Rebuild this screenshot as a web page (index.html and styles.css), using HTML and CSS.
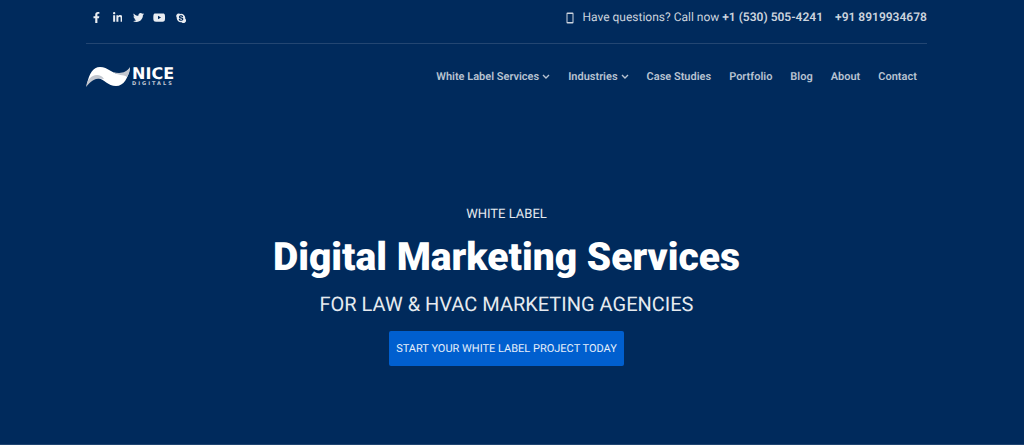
FILE: index.html
```html
<!DOCTYPE html>
<html lang="en">
<head>
<meta charset="utf-8">
<meta name="viewport" content="width=device-width, initial-scale=1">
<title>Nice Digitals</title>
<link rel="stylesheet" href="styles.css">
</head>
<body>
<header class="container">
  <div class="topbar">
    <nav class="social" aria-label="Social media">
      <a href="#" aria-label="Facebook"><svg class="icon" viewBox="0 0 320 512"><path d="M279.14 288l14.22-92.66h-88.91v-60.13c0-25.35 12.42-50.06 52.24-50.06h40.42V6.26S260.43 0 225.36 0c-73.22 0-121.08 44.38-121.08 124.72v70.62H22.89V288h81.39v224h100.17V288z"/></svg></a>
      <a href="#" aria-label="LinkedIn"><svg class="icon" viewBox="0 0 448 512"><path d="M100.28 448H7.4V148.9h92.88zM53.79 108.1C24.09 108.1 0 83.5 0 53.8a53.79 53.79 0 0 1 107.58 0c0 29.7-24.1 54.3-53.79 54.3zM447.9 448h-92.68V302.4c0-34.7-.7-79.2-48.29-79.2-48.29 0-55.69 37.7-55.69 76.7V448h-92.78V148.9h89.08v40.8h1.3c12.4-23.5 42.69-48.3 87.88-48.3 94 0 111.28 61.9 111.28 142.3V448z"/></svg></a>
      <a href="#" aria-label="Twitter"><svg class="icon" viewBox="0 0 512 512"><path d="M459.37 151.716c.325 4.548.325 9.097.325 13.645 0 138.72-105.583 298.558-298.558 298.558-59.452 0-114.68-17.219-161.137-47.106 8.447.974 16.568 1.299 25.34 1.299 49.055 0 94.213-16.568 130.274-44.832-46.132-.975-84.792-31.188-98.112-72.772 6.498.974 12.995 1.624 19.818 1.624 9.421 0 18.843-1.3 27.614-3.573-48.081-9.747-84.143-51.98-84.143-102.985v-1.299c13.969 7.797 30.214 12.67 47.431 13.319-28.264-18.843-46.781-51.005-46.781-87.391 0-19.492 5.197-37.36 14.294-52.954 51.655 63.675 129.3 105.258 216.365 109.807-1.624-7.797-2.599-15.918-2.599-24.04 0-57.828 46.782-104.934 104.934-104.934 30.213 0 57.502 12.67 76.67 33.137 23.715-4.548 46.456-13.32 66.599-25.34-7.798 24.366-24.366 44.833-46.132 57.827 21.117-2.273 41.584-8.122 60.426-16.243-14.292 20.791-32.161 39.308-52.628 54.253z"/></svg></a>
      <a href="#" aria-label="YouTube"><svg class="icon" viewBox="0 0 576 512"><path d="M549.655 124.083c-6.281-23.65-24.787-42.276-48.284-48.597C458.781 64 288 64 288 64S117.22 64 74.629 75.486c-23.497 6.322-42.003 24.947-48.284 48.597-11.412 42.867-11.412 132.305-11.412 132.305s0 89.438 11.412 132.305c6.281 23.65 24.787 41.5 48.284 47.821C117.22 448 288 448 288 448s170.78 0 213.371-11.486c23.497-6.321 42.003-24.171 48.284-47.821 11.412-42.867 11.412-132.305 11.412-132.305s0-89.438-11.412-132.305zm-317.51 213.508V175.185l142.739 81.205-142.739 81.201z"/></svg></a>
      <a href="#" aria-label="Skype"><svg class="icon icon-small" viewBox="0 0 24 24"><path fill-rule="evenodd" d="M7 1a6 6 0 0 0-5.200 9.500 10.300 10.300 0 0 0 11.700 11.700 6 6 0 0 0 8.700-8.700A10.300 10.300 0 0 0 10.500 2.200 6 6 0 0 0 7 1zM12.100 5.500c3 0 5 1.400 5 3 0 1-.7 1.700-1.700 1.700-1.700 0-1.500-2.300-3.500-2.300-1.100 0-1.800.5-1.800 1.200 0 1 1.300 1.100 3.200 1.600 2.600.6 4.300 1.600 4.300 3.900 0 2.600-2.200 4.200-5.500 4.200-3.200 0-5.400-1.500-5.400-3.300 0-1 .7-1.700 1.700-1.700 1.900 0 1.700 2.700 3.900 2.700 1.300 0 2-.6 2-1.400 0-1.100-1.300-1.300-3.300-1.800-2.700-.7-4-1.700-4-3.900 0-2.300 2-3.900 5.100-3.900z"/></svg></a>
    </nav>
    <div class="contact">
      <svg class="phone" viewBox="0 0 8 12"><path fill-rule="evenodd" d="M1.500.5h5a1 1 0 0 1 1 1v9a1 1 0 0 1-1 1h-5a1 1 0 0 1-1-1v-9a1 1 0 0 1 1-1zM1.500 2v8h5V2z"/></svg>
      <span>Have questions? Call now <a href="tel:+15305054241">+1 (530) 505-4241</a></span>
      <a class="second" href="tel:+918919934678">+91 8919934678</a>
    </div>
  </div>
  <div class="mainbar">
    <a class="logo" href="#" aria-label="Nice Digitals">
      <svg class="wave" viewBox="0 0 44 22">
        <path fill="#fff" d="M1 18C3 8 7 1 14 1c8 0 12 7 20 7 4 0 7-3 10-6-2 10-6 18-14 18-8 0-12-7-18-8-4 0-8 3-11 6z"/>
        <path fill="#c3c7cf" d="M0 21C1 14 5 9 11 9c3 0 5 1 7 4-7-2-13 1-18 8z"/>
        <path fill="#c3c7cf" d="M27 6c7 2 13 1 17-5 0 4-1 7-3 10-4-3-9-1-14-5z"/>
      </svg>
      <span class="wordmark"><span class="name">NICE</span><span class="tag">DIGITALS</span></span>
    </a>
    <nav class="menu" aria-label="Main">
      <a href="#">White Label Services<svg class="chevron" viewBox="0 0 8 6"><path d="M1 1l3 3 3-3"/></svg></a>
      <a href="#">Industries<svg class="chevron" viewBox="0 0 8 6"><path d="M1 1l3 3 3-3"/></svg></a>
      <a href="#">Case Studies</a>
      <a href="#">Portfolio</a>
      <a href="#">Blog</a>
      <a href="#">About</a>
      <a href="#">Contact</a>
    </nav>
  </div>
</header>
<main class="hero">
  <p class="eyebrow">WHITE LABEL</p>
  <h1>Digital Marketing Services</h1>
  <p class="subtitle">FOR LAW &amp; HVAC MARKETING AGENCIES</p>
  <a class="cta" href="#">START YOUR WHITE LABEL PROJECT TODAY</a>
</main>
</body>
</html>
```
FILE: styles.css
```css
* {
  box-sizing: border-box;
}

body {
  display: flex;
  flex-direction: column;
  min-height: 100vh;
  margin: 0;
  padding-right: 11px;
  background: #002a5c;
  border-bottom: 1px solid #1f4471;
  color: #fff;
  font-family: Roboto, "Liberation Sans", sans-serif;
  text-rendering: geometricPrecision;
}

a {
  color: inherit;
  text-decoration: none;
}

.container {
  width: 83%;
  margin: 0 auto;
}

.topbar {
  display: flex;
  align-items: center;
  justify-content: space-between;
  padding: 8px 0 16px;
  border-bottom: 1px solid #234672;
  color: #ccd4de;
  font-size: 12px;
  line-height: 19px;
}

.social {
  display: flex;
  color: #e9edf2;
}

.social a {
  display: flex;
  align-items: center;
  justify-content: center;
  width: 21px;
}

.icon {
  height: 11px;
  fill: currentColor;
}

.icon-small {
  height: 10px;
}

.contact {
  display: flex;
  align-items: center;
}

.contact a {
  font-weight: 600;
}

.contact .second {
  margin-left: 12px;
}

.phone {
  height: 12px;
  margin-right: 8px;
  fill: currentColor;
}

.mainbar {
  display: flex;
  align-items: center;
  justify-content: space-between;
  padding-top: 20px;
}

.logo {
  display: flex;
  align-items: center;
  gap: 2px;
}

.wave {
  width: 44px;
  height: 22px;
}

.wordmark {
  display: flex;
  flex-direction: column;
  font-family: "DejaVu Sans", sans-serif;
  font-weight: 700;
}

.name {
  font-size: 16px;
  line-height: 14px;
}

.tag {
  color: #c3cbd7;
  font-size: 5px;
  line-height: 6px;
  letter-spacing: 2px;
}

.menu {
  display: flex;
  gap: 18px;
  padding-right: 10px;
  color: #b8c3d2;
  font-size: 11px;
  font-weight: 600;
  line-height: 26px;
}

.chevron {
  width: 8px;
  height: 6px;
  margin-left: 3px;
  fill: none;
  stroke: currentColor;
  stroke-width: 1.4;
}

.hero {
  display: flex;
  flex: 1;
  flex-direction: column;
  align-items: center;
  padding: 115px 20px 60px;
  text-align: center;
}

.eyebrow,
.subtitle,
h1 {
  margin: 0;
}

.eyebrow {
  color: #e6eaef;
  font-size: 13px;
  line-height: 20px;
}

h1 {
  margin-top: 6px;
  font-size: 39px;
  font-weight: 900;
  line-height: 52px;
}

.subtitle {
  margin-top: 9px;
  color: #e6eaef;
  font-size: 20px;
  line-height: 24px;
}

.cta {
  margin-top: 15px;
  padding: 1px 7px 0;
  border-radius: 2px;
  background: #005fcf;
  color: #e6effa;
  font-size: 11px;
  line-height: 34px;
}
```
